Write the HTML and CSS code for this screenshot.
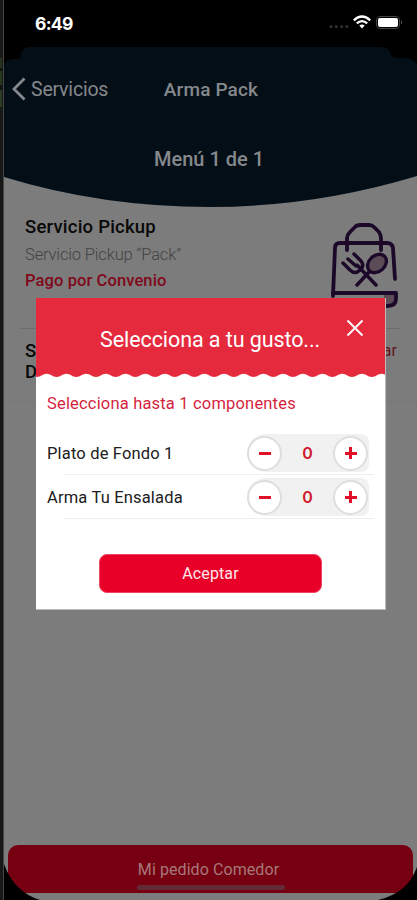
FILE: index.html
```html
<!DOCTYPE html>
<html lang="es">
<head>
<meta charset="utf-8">
<title>Arma Pack</title>
<link rel="stylesheet" href="styles.css">
</head>
<body>
<main class="phone">
  <div class="status">
    <span class="clock">6:49</span>
    <svg class="indicators" width="76" height="20" viewBox="0 0 76 20">
      <g fill="#333"><circle cx="3" cy="14.500" r="1.500"/><circle cx="8.300" cy="14.500" r="1.500"/><circle cx="13.600" cy="14.500" r="1.500"/><circle cx="18.900" cy="14.500" r="1.500"/></g>
      <g fill="none" stroke="#fff" stroke-width="2.300"><path d="M25.800 8.300Q34 .7 42.200 8.300"/><path d="M28.800 11.400Q34 6.800 39.200 11.400"/></g>
      <path fill="#fff" d="M31.300 13.500Q34 11.300 36.700 13.500L34 16.500Z"/>
      <rect x="48.500" y="4.500" width="23" height="12" rx="3.500" fill="none" stroke="#444"/>
      <rect x="50" y="6" width="20" height="9" rx="2" fill="#fff"/>
      <path d="M73 8.500q2 2 0 4z" fill="#666"/>
    </svg>
  </div>
  <header class="header">
    <svg class="curve" viewBox="0 0 413 160" width="413" height="160"><path fill="#040e17" d="M0 20Q1 12 9 12H13Q17 12 17 8Q18 0 26 0H378Q385 0 387 8Q388 11 393 11H401Q410 12 413 18V129Q310 160 206 160Q98 160 0 130Z"/></svg>
    <nav class="nav">
      <svg class="back" width="14" height="24" viewBox="0 0 14 24"><path d="M12.500 1.500L2 12L12.500 22.500" fill="none" stroke="#85898c" stroke-width="2.800"/></svg>
      <span class="back-label">Servicios</span>
      <h1>Arma Pack</h1>
    </nav>
    <h2>Menú 1 de 1</h2>
  </header>
  <section class="service">
    <div class="info">
      <h3>Servicio Pickup</h3>
      <p class="kind">Servicio Pickup “Pack”</p>
      <p class="payment">Pago por Convenio</p>
    </div>
    <svg class="bag" width="70" height="90" viewBox="0 0 70 90" fill="none" stroke="#1c0829" stroke-width="3.800" stroke-linecap="round" stroke-linejoin="round">
      <path d="M4 73L6 25Q6 20 11 20H58Q63 20 64 25L66 56M18 27V15Q18 12 21 9L27 3Q29 2 32 2H40Q43 2 45 4L50 9Q52 12 52 16V27"/>
      <path d="M55 72H66V76Q64 84 55 84Z" fill="#5b4c58" stroke="none"/>
      <path d="M4 70H67V76Q67 83 58 83" />
      <path d="M28 62L41 48M47 62L28 42M25 31L32 38Q36 43 31 47Q26 52 21 47L14 40M19 36L27 43" stroke-width="3.500"/>
      <ellipse cx="48" cy="40.500" rx="10.500" ry="8" transform="rotate(-43 48 40.500)" fill="#5b4c58" stroke-width="3.300"/>
    </svg>
  </section>
  <section class="selection">
    <h3>Selecciona<br>Detalle</h3><span class="action">Agregar</span>
  </section>
  <div class="order-area">
    <button class="order">Mi pedido Comedor</button>
  </div>
  <svg class="corners" width="413" height="60" viewBox="0 0 413 60"><path d="M0 24Q10 52 36 60H0ZM413 27Q404 53 374 60H413Z"/></svg>
  <i class="home"></i>
  <div class="modal" role="dialog">
    <div class="modal-head">
      <h2>Selecciona a tu gusto...</h2>
      <svg class="close" width="18" height="18" viewBox="0 0 18 18"><path d="M1.500 1.500L16.500 16.500M16.500 1.500L1.500 16.500" stroke="#fff" stroke-width="1.900"/></svg>
    </div>
    <svg class="wave" width="349" height="5" viewBox="0 0 349 5"><defs><pattern id="scallop" x="-9" width="19.700" height="5" patternUnits="userSpaceOnUse"><path fill="#e52a3d" d="M0 0H19.700V.8C16 .8 14 4 9.850 4S4 .8 0 .8Z"/></pattern></defs><rect width="349" height="5" fill="url(#scallop)"/></svg>
    <div class="modal-body">
      <p class="hint">Selecciona hasta 1 componentes</p>
      <div class="row"><span class="name">Plato de Fondo 1</span><div class="stepper"><button class="round minus" aria-label="Quitar"></button><b>0</b><button class="round plus" aria-label="Agregar"></button></div></div>
      <div class="row second"><span class="name">Arma Tu Ensalada</span><div class="stepper"><button class="round minus" aria-label="Quitar"></button><b>0</b><button class="round plus" aria-label="Agregar"></button></div></div>
      <button class="accept">Aceptar</button>
    </div>
  </div>
</main>
</body>
</html>
```
FILE: styles.css
```css
* { box-sizing: border-box; }
body { margin: 0; font-family: Roboto, "Liberation Sans", sans-serif; background: #111; }
h1, h2, h3, p { margin: 0; }
button { font: inherit; border: 0; padding: 0; }
.phone { position: relative; height: 900px; padding-left: 4px; display: flex; flex-direction: column; overflow: hidden; background: linear-gradient(90deg, #171918 0 3px, #444 3px 4px, #7c7c7c 4px); }
.phone::before { content: ""; position: absolute; left: 0; top: 58px; width: 2px; height: 49px; background: linear-gradient(#25331f 0 10px, #111 10px 13px, #26391f 13px 27px, #111 27px 32px, #2a3c24 32px); }
.status { height: 47px; flex: none; background: #000; padding: 12px 13px 0 31px; display: flex; justify-content: space-between; }
.clock { color: #fff; font: 700 17.500px/23px Inter, sans-serif; letter-spacing: -.7px; }
.header { position: relative; height: 160px; flex: none; background: linear-gradient(#000 0 30px, transparent 30px); text-align: center; color: #85898c; }
.curve { position: absolute; top: 0; left: 0; }
.nav { position: relative; height: 84px; display: grid; grid-template-columns: 14px 1fr; column-gap: 5px; align-items: center; padding-left: 8px; }
.back { grid-area: 1 / 1; }
.back-label { grid-area: 1 / 2; text-align: left; font-size: 19.500px; letter-spacing: -.2px; }
.nav h1 { grid-area: 1 / 1 / 2 / 3; padding-right: 7px; font-size: 19px; font-weight: 500; letter-spacing: .15px; }
.header > h2 { position: relative; font-size: 20px; font-weight: 500; line-height: 24px; padding: 16px 3px 0 0; letter-spacing: 0; }
.service { height: 122px; flex: none; margin: 0 16px; padding: 7px 0 0 5px; display: flex; justify-content: space-between; border-bottom: 1px solid #6c6c6c; }
.service h3, .selection h3 { font-size: 18.500px; font-weight: 500; color: #080808; }
.service h3 { line-height: 26px; letter-spacing: .22px; }
.kind { font-size: 16.500px; line-height: 29px; font-weight: 300; color: #434343; letter-spacing: -.15px; }
.payment { font-size: 16.500px; line-height: 24px; font-weight: 500; color: #80081b; letter-spacing: .1px; }
.bag { margin: 9px 2px 0 0; overflow: visible; flex: none; }
.selection { height: 73px; flex: none; padding: 12px 20px 0 21px; display: flex; justify-content: space-between; border-bottom: 1px solid #777; }
.selection h3 { line-height: 21px; }
.action { font-size: 16px; line-height: 20px; color: #651522; }
.order-area { flex: 1; display: flex; align-items: flex-end; padding: 0 4px 7px; }
.order { flex: 1; height: 48px; padding-right: 4px; border-radius: 10px; background: #760011; color: #a8787b; font-size: 16px; letter-spacing: .08px; }
.corners { position: absolute; left: 4px; bottom: 0; fill: #000; }
.home { position: absolute; left: 137px; bottom: 10px; width: 148px; height: 5px; border-radius: 3px; background: #632b35; }
.modal { position: absolute; left: 36px; top: 298px; width: 350px; height: 312px; display: flex; flex-direction: column; background: #fff; border: solid #bbb; border-width: 0 1px 1px 0; }
.modal-head { height: 75px; flex: none; background: #e52a3d; display: grid; }
.modal-head h2 { grid-area: 1 / 1; font-size: 21.500px; line-height: 24px; font-weight: 400; color: #fff; padding: 30px 0 0 64px; letter-spacing: -.08px; }
.close { grid-area: 1 / 1; justify-self: end; margin: 21px 21px 0 0; }
.wave { display: block; flex: none; width: 349px; height: 5px; }
.modal-body { display: flex; flex-direction: column; padding: 14px 11px 0; }
.hint { font-size: 16.500px; line-height: 23px; color: #d51f40; letter-spacing: .18px; }
.row { position: relative; height: 44px; flex: none; display: flex; align-items: center; justify-content: space-between; }
.hint + .row { height: 60px; padding-top: 16px; }
.row::after { content: ""; position: absolute; left: 17px; right: 0; bottom: 0; height: 1px; background: #eee; }
.name { font-size: 16.500px; color: #202020; letter-spacing: .17px; }
.stepper { width: 122px; height: 38px; margin-right: 5px; background: #f1f1f1; border-radius: 19px 8px 8px 19px; display: flex; align-items: center; justify-content: space-between; }
.stepper b { color: #cf172d; font: 600 16px Inter, sans-serif; }
.round { width: 35px; height: 35px; border: 2px solid #dedede; border-radius: 50%; }
.minus { background: linear-gradient(#df1028 0 0) center / 12px 3px no-repeat #fff; }
.plus { background: linear-gradient(#df1028 0 0) center / 12px 3px no-repeat, linear-gradient(#df1028 0 0) center / 3px 12px no-repeat #fff; margin-right: 1px; }
.accept { width: 223px; height: 39px; align-self: center; margin: 35px 0 0; border-radius: 8px; background: #e90028; color: #ffe7eb; font-size: 16px; letter-spacing: .1px; border: 1px solid #ed4665; }
```
